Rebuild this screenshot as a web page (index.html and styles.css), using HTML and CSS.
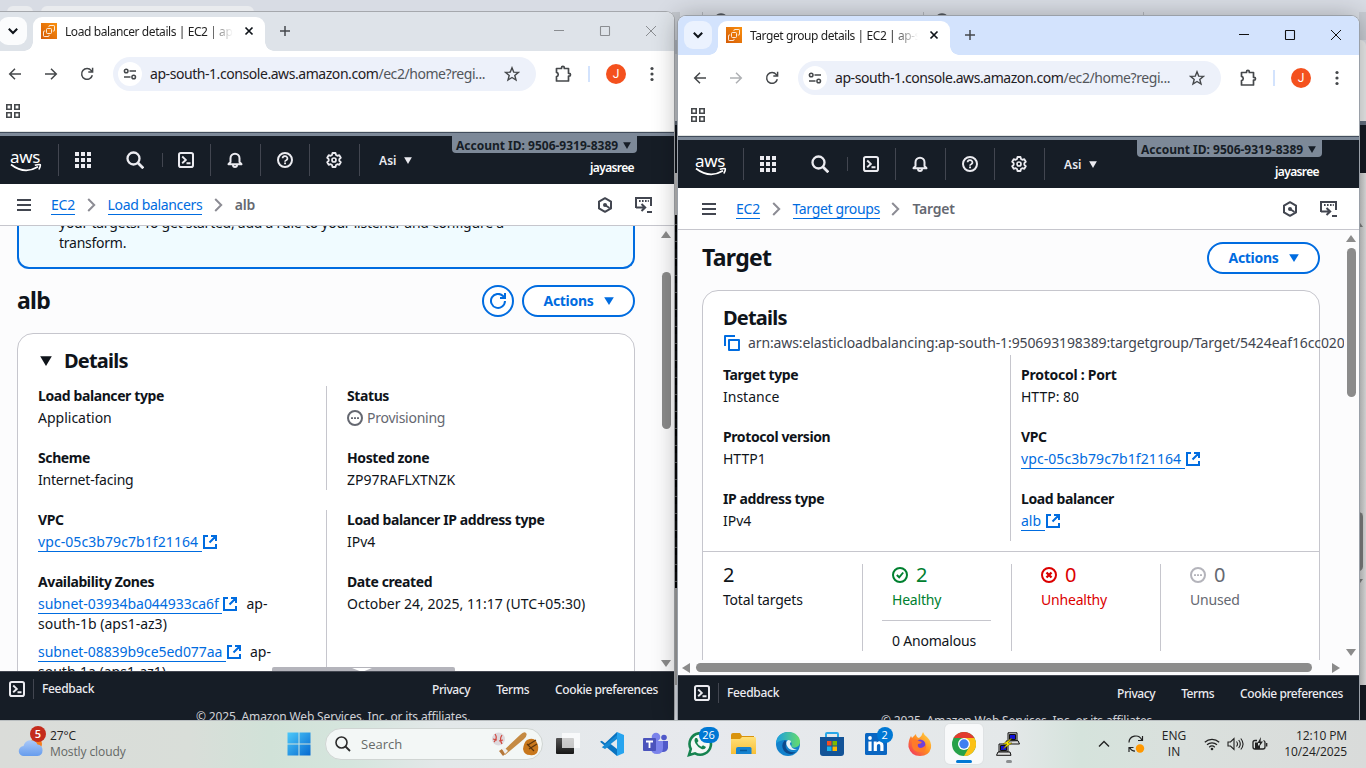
FILE: index.html
```html
<!DOCTYPE html>
<html lang="en">
<head>
<meta charset="utf-8">
<title>Load balancer and target group</title>
<link rel="stylesheet" href="styles.css">
</head>
<body>
<svg class="defs" aria-hidden="true">
  <defs>
    <linearGradient id="g-fav" x1="0" y1="1" x2="1" y2="0"><stop offset="0" stop-color="#d45b07"/><stop offset="1" stop-color="#fa8f0c"/></linearGradient>
    <linearGradient id="g-win" x1="0" y1="0" x2="1" y2="1"><stop offset="0" stop-color="#4cc9fa"/><stop offset="1" stop-color="#0669d0"/></linearGradient>
    <linearGradient id="g-cloud" x1="0" y1="0" x2="0" y2="1"><stop offset="0" stop-color="#aac9f8"/><stop offset="1" stop-color="#669ced"/></linearGradient>
    <linearGradient id="g-edge" x1="0" y1="0" x2="1" y2="0"><stop offset="0" stop-color="#1b9de2"/><stop offset="1" stop-color="#66dc6b"/></linearGradient>
    <linearGradient id="g-fire" x1="1" y1="0" x2="0" y2="1"><stop offset="0" stop-color="#ffe04b"/><stop offset=".5" stop-color="#ff8a20"/><stop offset="1" stop-color="#ef2a6c"/></linearGradient>
    <linearGradient id="g-folder" x1="0" y1="0" x2="0" y2="1"><stop offset="0" stop-color="#ffe07a"/><stop offset="1" stop-color="#f8bf35"/></linearGradient>
    <linearGradient id="g-dark" x1="0" y1="0" x2="0" y2="1"><stop offset="0" stop-color="#555"/><stop offset="1" stop-color="#161616"/></linearGradient>
  </defs>
  <symbol id="i-down" viewBox="0 0 10 10"><path d="M1.5 3.2 5 6.7 8.5 3.2" fill="none" stroke="currentColor" stroke-width="1.7"/></symbol>
  <symbol id="i-fav" viewBox="0 0 16 16"><path d="M0 0h16v16H0z" fill="url(#g-fav)"/><g fill="none" stroke="#fff" stroke-opacity=".85" stroke-width="1"><rect x="5.5" y="5.5" width="5" height="5" rx="1"/><path d="M8 4V3.200q0-.7.7-.7h4.100q.7 0 .7.700v4.100q0 .7-.7.7h-1M4.200 8H3.200q-.7 0-.7.700v4.100q0 .7.700.7h4.100q.7 0 .7-.7v-1"/></g></symbol>
  <symbol id="i-x" viewBox="0 0 10 10"><path d="m1.500 1.500 7 7m0-7-7 7" fill="none" stroke="currentColor" stroke-width="1.700"/></symbol>
  <symbol id="i-plus" viewBox="0 0 12 12"><path d="M6 1v10M1 6h10" fill="none" stroke="currentColor" stroke-width="1.500"/></symbol>
  <symbol id="i-min" viewBox="0 0 12 12"><path d="M1 5.500h10" fill="none" stroke="currentColor"/></symbol>
  <symbol id="i-max" viewBox="0 0 12 12"><rect x="1.500" y="1.500" width="9" height="9" rx=".5" fill="none" stroke="currentColor" stroke-width="1.100"/></symbol>
  <symbol id="i-close" viewBox="0 0 12 12"><path d="m1 1 10 10M11 1 1 11" fill="none" stroke="currentColor"/></symbol>
  <symbol id="i-back" viewBox="0 0 16 16"><path d="M14 8H3m5-5.300L2.700 8 8 13.300" fill="none" stroke="currentColor" stroke-width="1.500"/></symbol>
  <symbol id="i-fwd" viewBox="0 0 16 16"><path d="M2 8h11M8 2.700 13.300 8 8 13.300" fill="none" stroke="currentColor" stroke-width="1.500"/></symbol>
  <symbol id="i-reload" viewBox="0 0 16 16"><path d="M13.300 9.200A5.400 5.400 0 1 1 12.300 4.600L13.500 6M13.600 1.800V6.100H9.300" fill="none" stroke="currentColor" stroke-width="1.500"/></symbol>
  <symbol id="i-tune" viewBox="0 0 14 14"><g fill="none" stroke="currentColor" stroke-width="1.500"><circle cx="3.200" cy="4" r="1.800"/><circle cx="10.700" cy="10" r="1.800"/><path d="M6.500 4H13M1 10h6.500"/></g></symbol>
  <symbol id="i-star" viewBox="0 0 16 16"><path d="m8 1.800 1.700 4.300 4.700.3-3.600 3 1.200 4.600L8 11.500 4 14l1.200-4.600-3.600-3 4.700-.3z" fill="none" stroke="currentColor" stroke-width="1.400"/></symbol>
  <symbol id="i-ext" viewBox="0 0 18 18"><path d="M2.500 3.500h5V2.800a1.400 1.400 0 0 1 2.800 0v.7h4.200v4.800h.6a1.400 1.400 0 0 1 0 2.800h-.6v4.900h-12v-4.300a2.200 2.200 0 0 0 0-4.300z" fill="none" stroke="currentColor" stroke-width="1.700" stroke-linejoin="round"/></symbol>
  <symbol id="i-kebab" viewBox="0 0 4 16"><g fill="currentColor"><circle cx="2" cy="2.500" r="1.600"/><circle cx="2" cy="8" r="1.600"/><circle cx="2" cy="13.500" r="1.600"/></g></symbol>
  <symbol id="i-apps" viewBox="0 0 14 14"><path d="M.8.8h4.400v4.400H.8zM8.800.8h4.400v4.400H8.800zM.8 8.800h4.400v4.400H.8zM8.800 8.800h4.400v4.400H8.800z" fill="none" stroke="currentColor" stroke-width="1.600"/></symbol>
  <symbol id="i-smile" viewBox="0 0 32 10"><path d="M1 1.500Q14.500 12 28 3.800M24.800 2.300q4.600-1.300 5.400-.6.500 1.100-1.300 4.800" fill="none" stroke="#fff" stroke-width="1.700"/></symbol>
  <symbol id="i-grid" viewBox="0 0 16 16"><path d="M0 0h4v4H0zM6 0h4v4H6zM12 0h4v4h-4zM0 6h4v4H0zM6 6h4v4H6zM12 6h4v4h-4zM0 12h4v4H0zM6 12h4v4H6zM12 12h4v4h-4z" fill="currentColor"/></symbol>
  <symbol id="i-search" viewBox="0 0 18 18"><circle cx="7.500" cy="7.500" r="6" fill="none" stroke="currentColor" stroke-width="2.300"/><path d="m11.800 11.800 5.500 5.500" stroke="currentColor" stroke-width="2.700"/></symbol>
  <symbol id="i-term" viewBox="0 0 16 16"><rect x="1" y="1" width="14" height="14" rx="1.800" fill="none" stroke="currentColor" stroke-width="2"/><path d="m4.200 4.500 3.600 3.400-3.600 3.400M8.500 11.200h4" fill="none" stroke="currentColor" stroke-width="1.900"/></symbol>
  <symbol id="i-bell" viewBox="0 0 16 16"><path d="M3.500 10V6.200a4.500 4.500 0 0 1 9 0V10l2 2.200h-13zM6 12.500v.5a2 2 0 0 0 4 0v-.5" fill="none" stroke="currentColor" stroke-width="2" stroke-linejoin="round"/></symbol>
  <symbol id="i-help" viewBox="0 0 16 16"><circle cx="8" cy="8" r="7" fill="none" stroke="currentColor" stroke-width="2"/><path d="M5.600 6.300a2.400 2.200 0 1 1 3.600 1.900Q8 8.800 8 9.700" fill="none" stroke="currentColor" stroke-width="1.700"/><path d="M7.100 10.600H9v1.700H7.100z" fill="currentColor"/></symbol>
  <symbol id="i-gear" viewBox="0 0 16 16"><path d="m6.500 1-.5 2-1.300.8-2-.6-1.500 2.600L2.700 7.200v1.600l-1.500 1.400 1.500 2.600 2-.6 1.300.8.500 2h3l.5-2 1.300-.8 2 .6 1.500-2.600-1.500-1.400V7.200l1.500-1.400-1.500-2.600-2 .6L10 3 9.500 1z" fill="none" stroke="currentColor" stroke-width="1.800" stroke-linejoin="round"/><circle cx="8" cy="8" r="2" fill="none" stroke="currentColor" stroke-width="1.700"/></symbol>
  <symbol id="i-tri" viewBox="0 0 12 10" preserveAspectRatio="none"><path d="M.2.200h11.600L6 9.900z" fill="currentColor"/></symbol>
  <symbol id="i-menu" viewBox="0 0 14 12"><path d="M0 1h14M0 6h14M0 11h14" stroke="currentColor" stroke-width="2"/></symbol>
  <symbol id="i-chev" viewBox="0 0 9 14"><path d="m1.200 1 6 6-6 6" fill="none" stroke="currentColor" stroke-width="2"/></symbol>
  <symbol id="i-hex" viewBox="0 0 16 16"><path d="m8 1.200 6 3.400v6.800l-6 3.400-6-3.400V4.600z" fill="none" stroke="currentColor" stroke-width="2" stroke-linejoin="round"/><circle cx="8" cy="8" r="2" fill="currentColor"/><path d="m8 8 4.500 3" stroke="currentColor" stroke-width="1.800"/></symbol>
  <symbol id="i-shell" viewBox="0 0 18 16"><path d="M2 12H2M1 11V1h15v8" fill="none" stroke="currentColor" stroke-width="2"/><path d="M1 10.500h8.500M6.500 7l3.700 3.500L6.500 14M12 15h5" fill="none" stroke="currentColor" stroke-width="2"/><path d="M4 4h1.600m1.400 0h1.600m1.400 0h1.600m1.200 0h1" stroke="currentColor" stroke-width="1.800"/></symbol>
  <symbol id="i-out" viewBox="0 0 14 14"><path d="M5 1H1v12h12V9M8 1h5v5M12.500 1.500 6.500 7.500" fill="none" stroke="currentColor" stroke-width="2"/></symbol>
  <symbol id="i-copy" viewBox="0 0 16 16"><path d="M5 5h10v10H5zM1 11V1h10" fill="none" stroke="currentColor" stroke-width="2" stroke-linejoin="round"/></symbol>
  <symbol id="i-refresh" viewBox="0 0 16 16"><path d="M15 8a7 7 0 1 1-2-5L15 5M15 0v5h-5" fill="none" stroke="currentColor" stroke-width="2"/></symbol>
  <symbol id="i-dots" viewBox="0 0 16 16"><circle cx="8" cy="8" r="7" fill="none" stroke="currentColor" stroke-width="2"/><path d="M4 7.200h2v1.800H4zM7 7.200h2v1.800H7zM10 7.200h2v1.800h-2z" fill="currentColor"/></symbol>
  <symbol id="i-ok" viewBox="0 0 16 16"><circle cx="8" cy="8" r="7" fill="none" stroke="currentColor" stroke-width="2"/><path d="m4.800 8 2.400 2.300L11.200 5.500" fill="none" stroke="currentColor" stroke-width="1.900"/></symbol>
  <symbol id="i-bad" viewBox="0 0 16 16"><circle cx="8" cy="8" r="7" fill="none" stroke="currentColor" stroke-width="2"/><path d="m5.500 5.500 5 5m0-5-5 5" fill="none" stroke="currentColor" stroke-width="2.400"/></symbol>
</svg>

<div class="desktop">
  <div class="behind">
    <div class="behind-strip"><span class="behind-btn"></span><span class="behind-tab"></span></div>
    <svg class="behind-tabs" width="692" height="5" viewBox="0 0 692 5"><path d="M28.500 0v5M249.500 0v5M469.500 0v5" stroke="#b3b7bd"/><path d="M42 5a6 6 0 0 1 10 0M263 5a6 6 0 0 1 10 0" fill="none" stroke="#555a60" stroke-width="2"/></svg>
    <div class="sliver"><i class="s1"></i><i class="s2"></i><i class="s3"></i><i class="s4"></i><i class="s5"></i><i class="s6"></i><i class="s7"></i><i class="s8"></i></div>
    <div class="edge"><i class="e1"></i><i class="e2"></i><i class="e3"></i><i class="e4"><i class="e-up"></i><i class="e-thumb"></i><i class="e-dn"></i></i><i class="e5"></i></div>
  </div>

  <section class="window win-a">
    <div class="tabstrip">
      <span class="tabsearch"><svg width="12" height="12"><use href="#i-down"/></svg></span>
      <div class="tab"><svg width="16" height="16"><use href="#i-fav"/></svg><span class="tab-title">Load balancer details | EC2 | ap-</span><svg class="tab-x" width="10" height="10"><use href="#i-x"/></svg></div>
      <svg class="newtab" width="12" height="12"><use href="#i-plus"/></svg>
      <div class="controls"><svg width="12" height="12"><use href="#i-min"/></svg><svg width="12" height="12"><use href="#i-max"/></svg><svg width="12" height="12"><use href="#i-close"/></svg></div>
    </div>
    <div class="toolbar">
      <span class="tb"><svg width="16" height="16"><use href="#i-back"/></svg></span><span class="tb"><svg width="16" height="16"><use href="#i-fwd"/></svg></span><span class="tb"><svg width="16" height="16"><use href="#i-reload"/></svg></span>
      <div class="url"><span class="site"><svg width="14" height="14"><use href="#i-tune"/></svg></span><span class="addr">ap-south-1.console.aws.amazon.com<em>/ec2/home?regi...</em></span><svg class="star" width="16" height="16"><use href="#i-star"/></svg></div>
      <svg class="ext" width="18" height="18"><use href="#i-ext"/></svg><span class="tb-div"></span><span class="avatar">J</span><svg class="kebab" width="4" height="16"><use href="#i-kebab"/></svg>
    </div>
    <div class="bookmarks"><svg width="14" height="14"><use href="#i-apps"/></svg></div>
    <div class="aws-line"></div>
    <nav class="aws">
      <div class="logo">aws<svg width="32" height="10"><use href="#i-smile"/></svg></div>
      <span class="n n-grid"><svg width="16" height="16"><use href="#i-grid"/></svg></span>
      <span class="n n-search"><svg width="18" height="18"><use href="#i-search"/></svg></span>
      <span class="n n-short"><svg width="16" height="16"><use href="#i-term"/></svg></span>
      <span class="n"><svg width="16" height="16"><use href="#i-bell"/></svg></span>
      <span class="n"><svg width="16" height="16"><use href="#i-help"/></svg></span>
      <span class="n"><svg width="16" height="16"><use href="#i-gear"/></svg></span>
      <span class="n n-region">Asi<svg width="8" height="7"><use href="#i-tri"/></svg></span>
      <div class="acct"><span class="acct-id">Account ID: 9506-9319-8389<svg width="8" height="7"><use href="#i-tri"/></svg></span><span class="user">jayasree</span></div>
    </nav>
    <div class="crumbs"><svg class="menu" width="14" height="12"><use href="#i-menu"/></svg><a>EC2</a><svg class="chev" width="9" height="14"><use href="#i-chev"/></svg><a>Load balancers</a><svg class="chev" width="9" height="14"><use href="#i-chev"/></svg><b>alb</b><span class="tools"><svg width="16" height="16"><use href="#i-hex"/></svg><svg width="18" height="16"><use href="#i-shell"/></svg></span></div>
    <div class="content">
      <div class="page">
        <div class="alert"><p>your targets. To get started, add a rule to your listener and configure a<br>transform.</p></div>
        <div class="head head-a"><h1>alb</h1><div class="acts"><span class="round"><svg width="16" height="16"><use href="#i-refresh"/></svg></span><span class="pill">Actions<svg width="10" height="8"><use href="#i-tri"/></svg></span></div></div>
        <div class="card card-a">
          <h2><svg width="12" height="10"><use href="#i-tri"/></svg>Details</h2>
          <div class="pair">
            <dl class="short"><dt>Load balancer type</dt><dd>Application</dd><dt>Scheme</dt><dd class="snug">Internet-facing</dd></dl>
            <dl class="short"><dt>Status</dt><dd class="muted"><svg width="16" height="16"><use href="#i-dots"/></svg>Provisioning</dd><dt>Hosted zone</dt><dd>ZP97RAFLXTNZK</dd></dl>
            <dl><dt>VPC</dt><dd class="vpc"><a>vpc-05c3b79c7b1f21164 </a><svg width="14" height="14"><use href="#i-out"/></svg></dd><dt>Availability Zones</dt><dd class="zone"><a>subnet-03934ba044933ca6f </a><svg width="14" height="14"><use href="#i-out"/></svg><span>ap-</span><br>south-1b (aps1-az3)</dd><dd class="zone"><a>subnet-08839b9ce5ed077aa </a><svg width="14" height="14"><use href="#i-out"/></svg><span>ap-</span><br>south-1a (aps1-az1)</dd></dl>
            <dl><dt>Load balancer IP address type</dt><dd>IPv4</dd><dt>Date created</dt><dd>October 24, 2025, 11:17 (UTC+05:30)</dd></dl>
          </div>
        </div>
      </div>
      <div class="vscroll vs-a"><i class="up"></i><i class="thumb"></i><i class="dn"></i></div>
      <div class="handle"><i></i></div>
    </div>
    <footer><div class="foot-row"><svg width="16" height="16"><use href="#i-term"/></svg><span class="fb">Feedback</span><span class="links"><span>Privacy</span><span>Terms</span><span>Cookie preferences</span></span></div><div class="copy">© 2025, Amazon Web Services, Inc. or its affiliates.</div></footer>
  </section>

  <section class="window win-b">
    <div class="tabstrip">
      <span class="tabsearch"><svg width="12" height="12"><use href="#i-down"/></svg></span>
      <div class="tab"><svg width="16" height="16"><use href="#i-fav"/></svg><span class="tab-title">Target group details | EC2 | ap-s</span><svg class="tab-x" width="10" height="10"><use href="#i-x"/></svg></div>
      <svg class="newtab" width="12" height="12"><use href="#i-plus"/></svg>
      <div class="controls"><svg width="12" height="12"><use href="#i-min"/></svg><svg width="12" height="12"><use href="#i-max"/></svg><svg width="12" height="12"><use href="#i-close"/></svg></div>
    </div>
    <div class="toolbar">
      <span class="tb"><svg width="16" height="16"><use href="#i-back"/></svg></span><span class="tb off"><svg width="16" height="16"><use href="#i-fwd"/></svg></span><span class="tb"><svg width="16" height="16"><use href="#i-reload"/></svg></span>
      <div class="url"><span class="site"><svg width="14" height="14"><use href="#i-tune"/></svg></span><span class="addr">ap-south-1.console.aws.amazon.com<em>/ec2/home?regi...</em></span><svg class="star" width="16" height="16"><use href="#i-star"/></svg></div>
      <svg class="ext" width="18" height="18"><use href="#i-ext"/></svg><span class="tb-div"></span><span class="avatar">J</span><svg class="kebab" width="4" height="16"><use href="#i-kebab"/></svg>
    </div>
    <div class="bookmarks"><svg width="14" height="14"><use href="#i-apps"/></svg></div>
    <div class="aws-line"></div>
    <nav class="aws">
      <div class="logo">aws<svg width="32" height="10"><use href="#i-smile"/></svg></div>
      <span class="n n-grid"><svg width="16" height="16"><use href="#i-grid"/></svg></span>
      <span class="n n-search"><svg width="18" height="18"><use href="#i-search"/></svg></span>
      <span class="n n-short"><svg width="16" height="16"><use href="#i-term"/></svg></span>
      <span class="n"><svg width="16" height="16"><use href="#i-bell"/></svg></span>
      <span class="n"><svg width="16" height="16"><use href="#i-help"/></svg></span>
      <span class="n"><svg width="16" height="16"><use href="#i-gear"/></svg></span>
      <span class="n n-region">Asi<svg width="8" height="7"><use href="#i-tri"/></svg></span>
      <div class="acct"><span class="acct-id">Account ID: 9506-9319-8389<svg width="8" height="7"><use href="#i-tri"/></svg></span><span class="user">jayasree</span></div>
    </nav>
    <div class="crumbs"><svg class="menu" width="14" height="12"><use href="#i-menu"/></svg><a>EC2</a><svg class="chev" width="9" height="14"><use href="#i-chev"/></svg><a>Target groups</a><svg class="chev" width="9" height="14"><use href="#i-chev"/></svg><b>Target</b><span class="tools"><svg width="16" height="16"><use href="#i-hex"/></svg><svg width="18" height="16"><use href="#i-shell"/></svg></span></div>
    <div class="content content-b">
      <div class="page">
        <div class="head head-b"><h1>Target</h1><div class="acts"><span class="pill">Actions<svg width="10" height="8"><use href="#i-tri"/></svg></span></div></div>
        <div class="card card-b">
          <h2>Details</h2>
          <div class="arn"><svg width="16" height="16"><use href="#i-copy"/></svg><span>arn:aws:elasticloadbalancing:ap-south-1:950693198389:targetgroup/Target/5424eaf16cc020</span></div>
          <div class="pair pair-b">
            <dl><dt>Target type</dt><dd>Instance</dd><dt>Protocol version</dt><dd>HTTP1</dd><dt>IP address type</dt><dd>IPv4</dd></dl>
            <dl><dt class="loose">Protocol : Port</dt><dd>HTTP: 80</dd><dt>VPC</dt><dd class="vpc"><a>vpc-05c3b79c7b1f21164 </a><svg width="14" height="14"><use href="#i-out"/></svg></dd><dt>Load balancer</dt><dd><a>alb </a><svg width="14" height="14"><use href="#i-out"/></svg></dd></dl>
          </div>
          <div class="stats">
            <div><strong>2</strong><span>Total targets</span></div>
            <div class="ok"><strong><svg width="16" height="16"><use href="#i-ok"/></svg>2</strong><span>Healthy</span><span class="anom">0 Anomalous</span></div>
            <div class="bad"><strong><svg width="16" height="16"><use href="#i-bad"/></svg>0</strong><span>Unhealthy</span></div>
            <div class="unused"><strong><svg width="16" height="16"><use href="#i-dots"/></svg>0</strong><span>Unused</span></div>
          </div>
        </div>
      </div>
      <div class="vscroll vs-b"><i class="up"></i><i class="thumb"></i><i class="dn"></i></div>
      <div class="hscroll"><i class="lf"></i><i class="hthumb"></i><i class="rt"></i></div>
    </div>
    <footer><div class="foot-row"><svg width="16" height="16"><use href="#i-term"/></svg><span class="fb">Feedback</span><span class="links"><span>Privacy</span><span>Terms</span><span>Cookie preferences</span></span></div><div class="copy">© 2025, Amazon Web Services, Inc. or its affiliates.</div></footer>
  </section>

  <div class="taskbar">
    <div class="weather">
      <span class="w-ico"><svg width="26" height="24" viewBox="0 0 26 24"><circle cx="18" cy="10" r="6" fill="#f57c1c"/><path d="M6 22a5 5 0 0 1-.5-10 7.500 7.500 0 0 1 14-1.500A5.800 5.800 0 0 1 19.500 22z" fill="url(#g-cloud)"/></svg><b>5</b></span>
      <span class="w-txt"><span>27°C</span><span class="dim">Mostly cloudy</span></span>
    </div>
    <div class="dock">
      <span class="app start"><svg width="24" height="24" viewBox="0 0 24 24"><path d="M.5.500h11v11H.5zM12.500.500h11v11h-11zM.5 12.500h11v11H.5zM12.500 12.500h11v11h-11z" fill="url(#g-win)"/></svg></span>
      <div class="search"><svg width="16" height="16" viewBox="0 0 16 16"><circle cx="6.500" cy="6.500" r="5.500" fill="none" stroke="#2b2b2b" stroke-width="1.600"/><path d="m10.500 10.500 4.500 4.500" stroke="#2b2b2b" stroke-width="1.800"/></svg><span>Search</span>
        <svg class="ball" width="50" height="26" viewBox="0 0 50 26"><circle cx="8.500" cy="8" r="6.500" fill="#ddd9dd"/><path d="M5 3q3 4-1 8M12 4q-3 4 0 9M3 8l4 1M9 10l4-1" stroke="#d1453c" stroke-width="1.200" fill="none"/><path d="m12 21 18-17q4-4 6-2 2 2-2 6L15 24z" fill="#c58a43"/><path d="m9 20 3-2 4 4-3 3z" fill="#b5783a"/><path d="m12 18 2-2 4 4-3 3z" fill="#eee"/><path d="M33 18q1-7 4-9 6-3 9 1 4 6 1 12-3 3-7 2-6 0-7-6" fill="#c8771c"/><path d="m38 14 8-5m-7 9 8-5m-10 0 7 7" stroke="#5d350c" stroke-width="1.200"/></svg>
      </div>
      <span class="app"><svg width="24" height="24" viewBox="0 0 24 24"><rect x="0" y="6" width="18" height="16" rx="1" fill="url(#g-dark)"/><rect x="6" y="1" width="18" height="15" fill="#fff" fill-opacity=".72"/></svg></span>
      <span class="app"><svg width="24" height="24" viewBox="0 0 24 24"><path d="M17 0 5 11.300 1.800 8.800 0 9.800 17 24l1-7-3-5 3-6z" fill="#0a73c0"/><path d="M0 14.200 1.800 15.200 17 3v5.500L5 17z" fill="#1689d3"/><path d="M17 0 24 3v18l-7 3z" fill="#27a4ef"/><path d="m17 7-6.300 5 6.300 5z" fill="#e3e8ee"/></svg></span>
      <span class="app"><svg width="25" height="24" viewBox="0 0 25 24"><circle cx="13" cy="5" r="4.300" fill="#7b83eb"/><circle cx="21" cy="5.500" r="2.800" fill="#5059c9"/><path d="M17 9h8v7q-1 4-5 4h-3z" fill="#5059c9"/><path d="M8 9h12v7q0 6-6 6t-6-6z" fill="#7b83eb"/><rect x="0" y="6" width="13" height="13" rx="1" fill="#4b53bc"/><path d="M3 9.500h7M6.500 9.500V16" stroke="#fff" stroke-width="1.800"/></svg></span>
      <span class="app"><svg width="26" height="26" viewBox="0 0 26 26"><path d="m2 24 1.800-6A10.700 10.700 0 1 1 8 22.300z" fill="#f4f7f5" stroke="#16834f" stroke-width="2.600"/><path d="M8.500 7q-2 2 0 5.500t6 5.500q3.500 1 4.500-2l-3-1.800-1.600 1.500q-3-1-4.300-4L11.500 10 10 7z" fill="#16834f"/></svg><b class="badge wide">26</b></span>
      <span class="app"><svg width="25" height="24" viewBox="0 0 25 24"><path d="M0 3q0-2 2-2h7l2 3h12v5H0z" fill="#d9930d"/><path d="M0 7h9l2-2h13q1 0 1 2v15H0z" fill="url(#g-folder)"/><path d="M5 16.500q0-1.500 2-1.500h12q1.500 0 1.500 1.500V22H5z" fill="#1582cf"/><path d="M9 18.500h7" stroke="#075b9c" stroke-width="1.500"/></svg></span>
      <span class="app"><svg width="24" height="24" viewBox="0 0 24 24"><circle cx="12" cy="12" r="12" fill="#1281cc"/><path d="M0 12C0 4 6 0 12 0c8 0 12 5 12 10 0 6-8 7-9 4 2-2 0-6-5-6C5 8 1 10 0 12" fill="url(#g-edge)"/><path d="M9 8q-5 5-1 11 5 6 12 1-8 1-10-4-1-3 1-5z" fill="#0c4a8d"/><path d="M15 14q-2-3 0-4 0-2-3-2-3 2-1 6 3 6 11 3-5 1-7-3" fill="#e7f1f8"/></svg></span>
      <span class="app"><svg width="24" height="24" viewBox="0 0 24 24"><path d="M6 6V2q0-1 1-1h10q1 0 1 1v4" fill="none" stroke="#29a7e8" stroke-width="2"/><path d="M0 5h24v16q0 3-3 3H3q-3 0-3-3z" fill="#135397"/><path d="M7 9h4.500v4.500H7z" fill="#f25022"/><path d="M12.500 9H17v4.500h-4.500z" fill="#7fba00"/><path d="M7 14.500h4.500V19H7z" fill="#18b5f0"/><path d="M12.500 14.500H17V19h-4.500z" fill="#ffb900"/></svg></span>
      <span class="app"><svg width="22" height="22" viewBox="0 0 22 22"><rect width="22" height="22" rx="1.500" fill="#0a66c2"/><circle cx="5" cy="5" r="1.900" fill="#fff"/><path d="M3.400 8.500h3.200V18H3.400zM8.700 8.500h3v1.300c1.600-2.500 6.800-2 6.800 2.600V18h-3.200v-5c0-2.700-3.400-2.500-3.400 0v5H8.700z" fill="#fff"/></svg><b class="badge">2</b></span>
      <span class="app"><svg width="24" height="24" viewBox="0 0 24 24"><path d="M15 0q1 3 4 5 5 5 4 11-2 8-11 8T.5 15Q0 9 3 4l1 2 4-4q0 3 3 4 3-2 4-6" fill="url(#g-fire)"/><circle cx="12" cy="13" r="5.500" fill="#7140d8"/><path d="M4 8q4-2 7 1l3 1q-1 2-4 2-1 3 2 4 4 0 6-4 1 7-5 8-8 0-9-6" fill="#ff7a2a"/></svg></span>
      <span class="app active"><svg width="24" height="24" viewBox="0 0 24 24"><circle cx="12" cy="12" r="12" fill="#27a148"/><path d="M12 12 1.600 6A12 12 0 0 1 22.400 6z" fill="#e23b2e"/><path d="M12 6h10.400A12 12 0 0 1 12 24l5.200-9z" fill="#fbc116"/><path d="M1.600 6 6.800 15 12 6z" fill="#27a148"/><circle cx="12" cy="12" r="6" fill="#fff"/><circle cx="12" cy="12" r="4.700" fill="#3f7ff0"/></svg><i class="on"></i></span>
      <span class="app"><svg width="24" height="24" viewBox="0 0 24 24"><g stroke="#111" stroke-width="1"><path d="M12 .8h9v8h-9z" fill="#cfcfcf"/><path d="M13.500 2.500h6v5h-6z" fill="#1010d8"/><path d="m10 9 12-.3 1.500 3.300H11z" fill="#ddd"/><path d="M3 12h9v8H3z" fill="#cfcfcf"/><path d="M4.500 13.500h6v5h-6z" fill="#1010d8"/><path d="M2 20h12l1 3.300H.5z" fill="#ddd"/></g><path d="m16 6-9 6h4l-4 5 9-6h-4z" fill="#ffee00" stroke="#665b00" stroke-width=".6"/></svg><i class="run"></i></span>
    </div>
    <div class="tray">
      <svg class="t-up" width="12" height="8" viewBox="0 0 12 8"><path d="m1 6.500 5-5 5 5" fill="none" stroke="#222" stroke-width="1.400"/></svg>
      <svg class="t-sync" width="18" height="18" viewBox="0 0 18 18"><path d="M2 7.500A6.700 6.700 0 0 1 14.800 5M15.500 1v4.500H11M2 17v-4.500h4.500M2.700 12.500Q4.500 16 8 16.200" fill="none" stroke="#222" stroke-width="1.200"/><circle cx="13" cy="13.500" r="4.200" fill="#ff9800"/></svg>
      <span class="lang">ENG<br>IN</span>
      <svg class="t-wifi" width="16" height="14" viewBox="0 0 16 14"><g fill="none" stroke="#222" stroke-width="1.200"><path d="M.8 5.200a10.500 10.500 0 0 1 14.400 0M3 7.800a7.200 7.200 0 0 1 10 0M5.200 10.200a4.200 4.200 0 0 1 5.600 0"/></g><circle cx="8" cy="12" r="1.300" fill="#222"/></svg>
      <svg class="t-vol" width="17" height="14" viewBox="0 0 17 14"><path d="M1 5h2.500L7 1.500v11L3.500 9H1zM9.500 4.500q2 2.500 0 5M11.700 3q3.200 4 0 8M13.800 1.500q4.500 5.500 0 11" fill="none" stroke="#222" stroke-width="1.100"/></svg>
      <svg class="t-bat" width="16" height="14" viewBox="0 0 16 14"><path d="M5 3.500H3Q1 3.500 1 5.500v4.500q0 2 2 2h8q2 0 2-2V5.500q0-1.500-1.500-2M14.700 6v3.500" fill="none" stroke="#222" stroke-width="1.300"/><path d="M3 5.500h3v3h2V12H3z" fill="#222"/><path d="M9 0 5.500 6H8L7 10l4-5.500H8.500z" fill="#222"/></svg>
      <span class="clock">12:10 PM<br>10/24/2025</span>
    </div>
  </div>
</div>
</body>
</html>
```
FILE: styles.css
```css
* { box-sizing: border-box; }
body { margin: 0; font-family: "Noto Sans", sans-serif; font-size: 14px; color: #0f141a; overflow: hidden; }
svg { display: block; flex: none; }
.defs { position: absolute; width: 0; height: 0; }
.desktop { position: relative; width: 1366px; height: 768px; overflow: hidden; background: #d9dde4; }

/* windows that sit behind the two browsers */
.behind { position: absolute; inset: 0; }
.behind-strip { height: 12px; background: #d8dce4; display: flex; align-items: flex-end; gap: 8px; padding-left: 7px; }
.behind-btn { width: 26px; height: 6px; border-radius: 8px 8px 0 0; background: #e9ebee; }
.behind-tab { width: 213px; height: 6px; border-radius: 8px 8px 0 0; background: #e9ebee; }
.behind-tabs { position: absolute; left: 674px; top: 12px; }
.sliver { position: absolute; left: 672px; top: 12px; width: 8px; display: flex; flex-direction: column; }
.sliver i, .edge i { display: block; }
.s1 { height: 28px; background: #c5c9cf; }
.s2 { height: 14px; background: #a9afb8; }
.s3 { height: 67px; background: #bcbfc4; }
.s4 { height: 4px; background: #59636f; }
.s5 { height: 48px; background: #10151c; }
.s6 { height: 42px; background: #b9b9b9; }
.s7 { height: 373px; background: repeating-linear-gradient(#0a0a0a 0 9px, #555 9px 10px, #000 10px 17px); }
.s8 { height: 97px; background: #9d9d9d; }
.edge { position: absolute; left: 1359px; top: 12px; width: 7px; display: flex; flex-direction: column; }
.e1 { height: 28px; background: #c9cdd4; }
.e2 { height: 81px; background: #eceded; border-top-right-radius: 6px; }
.e3 { height: 52px; background: #151a22; border-top: 4px solid #657180; }
.e4 { position: relative; height: 512px; overflow: hidden; background: linear-gradient(90deg, #c6c6c6, #e5e5e5); }
.e4 i { position: absolute; }
.e-up { left: -6px; top: 47px; border: 5px solid transparent; border-top: 0; border-bottom: 7px solid #7c7c7c; }
.e-thumb { left: -5px; top: 339px; width: 9px; height: 59px; border-radius: 5px; background: #7c7c7c; }
.e-dn { left: -6px; top: 406px; border: 5px solid transparent; border-bottom: 0; border-top: 7px solid #7c7c7c; }
.e5 { height: 40px; background: #151a22; }

.window { position: absolute; width: 681px; display: flex; flex-direction: column; overflow: hidden; border-radius: 8px 8px 0 0; background: #fff; }
.win-a { left: -7px; top: 12px; height: 708px; box-shadow: 0 0 0 1px #a5a8ad; }
.win-b { left: 678px; top: 16px; height: 704px; box-shadow: 0 0 0 1px #9aa0a8, 0 2px 26px rgba(0,0,0,.32); }

.tabstrip { height: 39px; flex: none; display: flex; align-items: flex-start; padding: 5px 0 0 6px; background: #dee3e9; }
.win-b .tabstrip { background: #d3e3fd; }
.tabsearch { width: 28px; height: 28px; border-radius: 9px; background: #fbfcfd; display: flex; align-items: center; justify-content: center; }
.win-b .tabsearch { background: #ebf2fe; }
.tab { position: relative; width: 232px; height: 34px; margin-left: 6px; padding: 0 11px 6px 8px; border-radius: 9px 9px 0 0; background: #fff; display: flex; align-items: center; }
.tab::before, .tab::after { content: ""; position: absolute; bottom: 0; width: 9px; height: 9px; }
.tab::before { left: -9px; background: radial-gradient(circle at 0 0, transparent 8.500px, #fff 9px); }
.tab::after { right: -9px; background: radial-gradient(circle at 100% 0, transparent 8.500px, #fff 9px); }
.tab-title { width: 168px; margin-left: 8px; overflow: hidden; white-space: nowrap; font-size: 12px; letter-spacing: -.42px; color: #1f1f1f; -webkit-mask-image: linear-gradient(90deg, #000 85%, transparent); mask-image: linear-gradient(90deg, #000 85%, transparent); }
.tab-x { margin-left: auto; }
.newtab { margin: 8px 0 0 14px; color: #45484c; }
.controls { display: flex; gap: 34px; margin: 8px 17px 0 auto; color: #111; }
.win-a .controls { color: #8a8d91; }

.toolbar { height: 46px; flex: none; display: flex; align-items: center; padding-left: 4px; color: #45484b; }
.tb { width: 36px; display: flex; justify-content: center; }
.off { color: #afb1b4; }
.url { width: 423px; height: 34px; margin-left: 8px; padding: 0 16px 0 5px; border-radius: 17px; background: #edf1fa; display: flex; align-items: center; }
.site { width: 24px; height: 24px; border-radius: 50%; background: #fff; display: flex; align-items: center; justify-content: center; }
.addr { margin: -1px 0 0 8px; font-size: 14px; letter-spacing: -.44px; white-space: nowrap; color: #1f2023; }
.addr em { font-style: normal; color: #53565b; }
.star { margin-left: auto; }
.ext { margin-left: 18px; }
.tb-div { width: 2px; height: 16px; margin-left: 16px; background: #d3e3fd; }
.avatar { width: 20px; height: 20px; margin-left: 16px; border-radius: 50%; background: #f4511e; color: #fff; font: 12px/20px Roboto, sans-serif; text-align: center; }
.kebab { margin-left: 24px; }
.bookmarks { height: 35px; flex: none; padding: 7px 13px; color: #45484b; border-bottom: 1px solid #e2e5e3; }
.aws-line { height: 4px; flex: none; background: #7d8998; border-top: 1px solid #424d5c; }

.aws { height: 48px; flex: none; display: flex; align-items: center; background: #161d26; color: #ebebf0; }
.logo { width: 65px; padding-left: 17px; font-size: 17px; line-height: 17px; letter-spacing: -.3px; color: #fff; }
.logo svg { margin-top: -2px; }
.n { position: relative; height: 32px; width: 49.700px; display: flex; align-items: center; justify-content: center; }
.n::before { content: ""; position: absolute; left: 0; top: 0; width: 1px; height: 32px; background: #424650; }
.n-grid { width: 50px; }
.n-search { width: 54px; }
.n-search::before { display: none; }
.n-short { width: 48px; }
.n-short::before { top: 9px; height: 14px; }
.n-region { width: 80px; justify-content: flex-start; padding-left: 20px; gap: 8px; font-size: 12px; font-weight: 600; }
.acct { align-self: flex-start; margin: -3px 37px 0 auto; display: flex; flex-direction: column; align-items: flex-end; }
.acct-id { width: 185px; height: 20px; padding: 5px 6px 0 4px; display: flex; align-items: center; justify-content: space-between; border-radius: 0 0 4px 4px; background: #7d8998; color: #161d26; font-size: 12px; line-height: 15px; font-weight: 700; white-space: nowrap; }
.user { margin: 7px 3px 0 0; font-size: 12px; font-weight: 600; line-height: 16px; letter-spacing: -.62px; color: #fff; }

.crumbs { height: 42px; flex: none; display: flex; align-items: center; padding-left: 24px; border-bottom: 1px solid #c6c6cd; color: #424650; }
a { color: #006ce0; border-bottom: 1px solid #006ce0; white-space: pre; }
.crumbs a { line-height: 19px; letter-spacing: -.35px; }
.crumbs a:first-of-type { letter-spacing: -.2px; }
.menu { margin-right: 20px; }
.chev { margin: 0 12px 0 11.500px; color: #8c8c94; }
.crumbs b { color: #656871; font-weight: 600; letter-spacing: -.2px; }
.tools { margin: 0 21px 0 auto; display: flex; gap: 22px; }

.content { position: relative; height: 445px; flex: none; overflow: hidden; background: #fcfcfd; }
.page { width: 666px; height: 445px; padding: 0 24px; overflow: hidden; }
.content-b .page { height: 430px; }
.alert { height: 43px; display: flex; align-items: flex-end; padding: 0 0 14px 40px; border: 2px solid #006ce0; border-top: 0; border-radius: 0 0 12px 12px; background: #f0fbff; line-height: 20px; }
.alert p { margin: 0; white-space: nowrap; letter-spacing: -.25px; }
.head { display: flex; align-items: center; justify-content: space-between; }
.head-a { padding: 16px 0; }
.head-b { padding: 12px 0 16px; }
h1 { margin: -2px 0 0; font-size: 23px; line-height: 32px; letter-spacing: -.7px; }
.acts { display: flex; gap: 8px; color: #006ce0; }
.round { width: 32px; height: 32px; border: 2px solid #006ce0; border-radius: 50%; display: flex; align-items: center; justify-content: center; background: #fff; }
.pill { width: 113px; height: 32px; border: 2px solid #006ce0; border-radius: 16px; display: flex; align-items: center; justify-content: space-between; padding: 0 19px 1px 19.500px; font-weight: 700; letter-spacing: -.3px; background: #fff; }
.card { border: 1px solid #c6c6cd; border-radius: 16px; background: #fff; height: 500px; width: 618px; }
h2 { margin: 0; font-size: 20px; line-height: 24px; letter-spacing: -.8px; }
.card-a h2 { display: flex; align-items: center; gap: 12px; padding: 15px 0 13px 22px; }
.card-b h2 { padding: 15px 0 0 20px; }
.pair { display: grid; grid-template-columns: 308px 308px; row-gap: 20px; }
dl { margin: 0; padding-left: 20px; line-height: 20px; }
dl:nth-child(even) { border-left: 1px solid #c6c6cd; }
.short { height: 104px; }
dl:nth-child(n+3) { min-height: 175px; }
dt { font-weight: 700; letter-spacing: -.4px; }
.loose { letter-spacing: -.25px; }
dd { margin: 2px 0 20px; white-space: nowrap; }
dd svg { display: inline-block; vertical-align: -2px; margin-left: 1px; color: #006ce0; }
dd a { line-height: 16px; }
.snug { letter-spacing: -.2px; }
.vpc a { letter-spacing: .08px; }
.muted { display: flex; align-items: center; color: #656871; letter-spacing: -.25px; }
.muted svg { margin: 0 4px 0 0; color: #656871; }
.zone { margin-bottom: 8px; }
.zone a { letter-spacing: -.05px; }
.zone span { margin-left: 9px; }
.arn { display: flex; align-items: center; height: 25px; padding-left: 21px; gap: 8px; color: #424650; white-space: nowrap; letter-spacing: -.11px; }
.arn svg { color: #006ce0; }
.pair-b { grid-template-columns: 307px 309px; height: 186px; }
.pair-b dl { height: 186px; padding-top: 10px; }
.pair-b dl:nth-child(even) { padding-left: 10px; }
.stats { display: flex; margin-top: 10px; padding-top: 12px; border-top: 1px solid #c6c6cd; }
.stats > div { width: 149px; height: 87px; padding-left: 29px; border-left: 1px solid #c6c6cd; }
.stats > div:first-child { width: 159px; border-left: 0; padding-left: 20px; }
.stats strong { display: flex; align-items: center; gap: 8px; font-size: 20px; line-height: 22px; font-weight: 400; }
.stats span { display: block; line-height: 20px; margin-top: 4px; letter-spacing: -.2px; }
.ok { color: #00802f; }
.bad { color: #db0000; }
.unused { color: #656871; }
.unused svg { color: #b4b4bb; }
.stats .anom { width: 109px; margin: 10px 0 0 -10px; padding: 10px 0 0 10px; border-top: 1px solid #c6c6cd; color: #0f141a; white-space: nowrap; }

.vscroll { position: absolute; right: 0; top: 0; width: 15px; height: 445px; }
.vscroll i, .hscroll i { position: absolute; }
.up { left: 2px; top: 5px; border: 5px solid transparent; border-top: 0; border-bottom: 7px solid #8b8b8b; }
.dn { left: 2px; bottom: 4px; border: 5px solid transparent; border-bottom: 0; border-top: 7px solid #8b8b8b; }
.thumb { left: 3px; width: 9px; border-radius: 5px; background: #8b8b8b; }
.vs-a .thumb { top: 46px; height: 157px; }
.vs-b { height: 430px; }
.vs-b .thumb { top: 18px; height: 149px; }
.hscroll { position: absolute; left: 0; bottom: 0; width: 681px; height: 15px; background: #fcfcfd; }
.lf { left: 4px; top: 3px; border: 5px solid transparent; border-left: 0; border-right: 8px solid #8b8b8b; }
.rt { right: 19px; top: 3px; border: 5px solid transparent; border-right: 0; border-left: 8px solid #8b8b8b; }
.hthumb { left: 18px; top: 3px; width: 616px; height: 9px; border-radius: 5px; background: #8b8b8b; }
.handle { position: absolute; left: 279px; bottom: 0; width: 183px; height: 4px; border-radius: 2px 2px 0 0; background: #b4b4bb; }
.handle i { position: absolute; left: 80px; top: 1px; border: 10px solid transparent; border-bottom: 0; border-top: 4px solid #fff; }

footer { flex: 1; background: #161d26; border-top: 1px solid #424650; color: #ebebf0; font-size: 12px; overflow: hidden; }
.foot-row { height: 34px; display: flex; align-items: center; padding: 0 16px; font-weight: 500; letter-spacing: -.42px; }
.fb { margin-left: 8px; padding-left: 8px; line-height: 20px; letter-spacing: -.3px; border-left: 1px solid #424650; }
.links { margin-left: auto; display: flex; gap: 26px; }
.copy { padding: 2px 0 0 203px; line-height: 18px; letter-spacing: -.16px; color: #d0d1d6; }

.taskbar { position: absolute; left: 0; top: 720px; width: 1366px; height: 48px; padding-bottom: 2px; display: flex; align-items: center; border-top: 1px solid #b9bec0; background: linear-gradient(90deg, #dadcd9 0, #d9ded9 190px, #d1e2d8 270px, #d5e5dd 350px, #e3e8e9 440px, #e7e9ed 700px, #e4e8e9 1010px, #d5e3dc 1080px, #dae0dd 1180px, #d9dbda 100%); color: #222; font-family: "Open Sans", sans-serif; font-size: 12px; }
.weather { width: 277px; padding-left: 18px; display: flex; gap: 6px; }
.w-ico { position: relative; width: 26px; height: 32px; padding-top: 6px; }
.w-ico b { position: absolute; left: 12px; top: -2px; width: 16px; height: 16px; border-radius: 50%; background: #c42b1c; color: #fff; font-size: 11px; line-height: 16px; font-weight: 600; text-align: center; }
.w-txt { display: flex; flex-direction: column; line-height: 16px; letter-spacing: -.1px; }
.dim { color: #646765; }
.dock { display: flex; align-items: center; }
.app { position: relative; width: 44px; height: 40px; display: flex; align-items: center; justify-content: center; }
.start { margin-right: 4px; }
.search { width: 218px; height: 32px; margin-right: 2.600px; padding: 0 2px 0 9px; border: 1px solid #d0d5d3; border-radius: 16px; background: #f3f7f6; display: flex; align-items: center; gap: 10px; color: #666a68; font-size: 13px; }
.ball { margin-left: auto; }
.badge { position: absolute; left: 23px; top: 3px; width: 16px; height: 16px; border-radius: 8px; background: #0078d4; color: #fff; font-size: 11px; line-height: 16px; font-weight: 400; text-align: center; }
.wide { left: 21px; width: 20px; }
.active { width: 38px; margin: 0 3px; border-radius: 5px; background: #f8f9fa; box-shadow: 0 0 0 1px #dfe2e4; }
.on { position: absolute; left: 11px; bottom: 1px; width: 16px; height: 3px; border-radius: 2px; background: #0078d4; }
.run { position: absolute; left: 20px; bottom: 1px; width: 6px; height: 3px; border-radius: 2px; background: #8b8e90; }
.tray { margin-left: auto; padding-right: 19px; display: flex; align-items: center; line-height: 16px; }
.t-sync { margin-left: 17px; }
.lang { width: 26px; margin-left: 16px; text-align: center; white-space: nowrap; }
.t-wifi { margin-left: 17px; }
.t-vol { margin-left: 7px; }
.t-bat { margin-left: 8px; }
.clock { width: 66px; margin-left: 13px; text-align: right; white-space: nowrap; letter-spacing: -.1px; display: block; }
```
